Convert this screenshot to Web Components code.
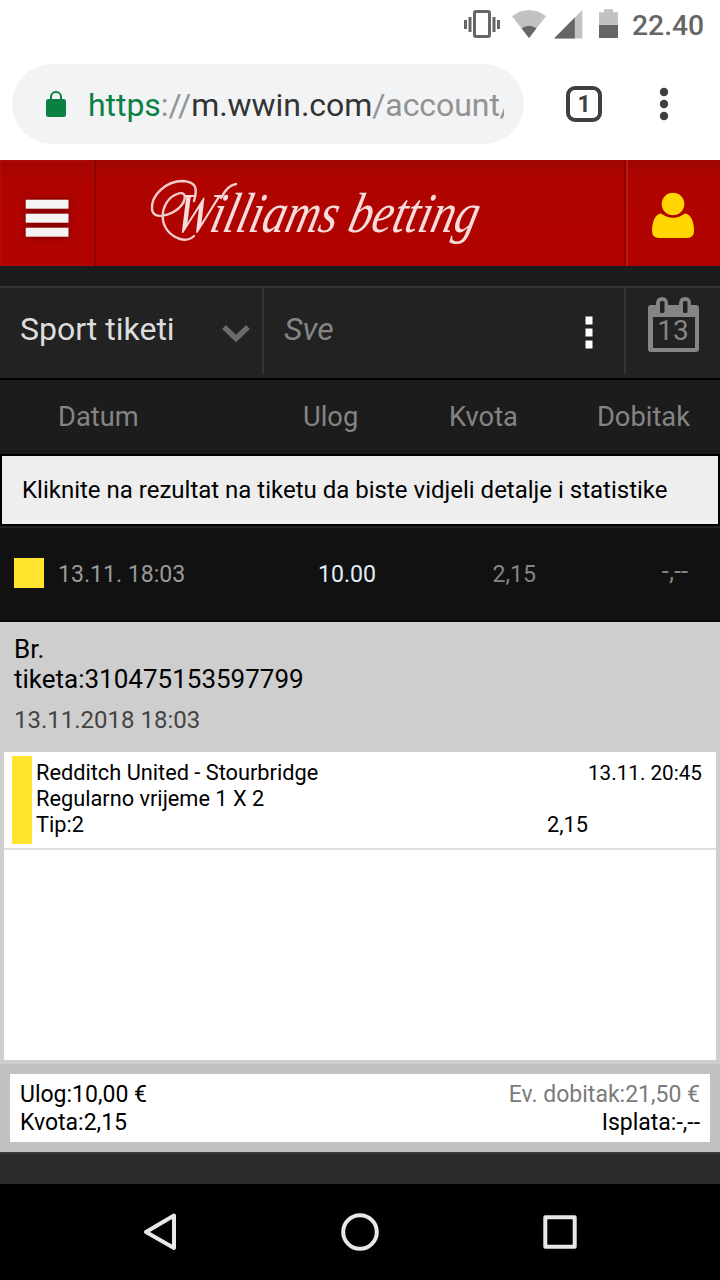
<!DOCTYPE html>
<html lang="bs">
<head>
<meta charset="utf-8">
<meta name="viewport" content="width=device-width, initial-scale=1">
<title>Williams betting</title>
<style>
	html, body {
		margin: 0;
		padding: 0;
	}
	body {
		width: 720px;
		height: 1280px;
		overflow: hidden;
		background: #2b2b2b;
		font-family: Roboto, "Liberation Sans", sans-serif;
	}
</style>
</head>
<body>
<phone-screen>
	<status-bar slot="top" time="22.40"></status-bar>
	<browser-bar slot="top" tabs="1"></browser-bar>
	<site-header></site-header>
	<ticket-filter kind="Sport tiketi" day="13">Sve</ticket-filter>
	<column-heads></column-heads>
	<info-note>Kliknite na rezultat na tiketu da biste vidjeli detalje i statistike</info-note>
	<ticket-row date="13.11. 18:03" stake="10.00" odds="2,15" win="-,--"></ticket-row>
	<ticket-detail number="310475153597799" date="13.11.2018 18:03">
		<match-item time="13.11. 20:45" odds="2,15">
			<span>Redditch United - Stourbridge</span>
			<span slot="market">Regularno vrijeme 1 X 2</span>
			<span slot="tip">Tip:2</span>
		</match-item>
	</ticket-detail>
	<ticket-totals>
		<span slot="left">Ulog:10,00 €</span>
		<span slot="left">Kvota:2,15</span>
		<span slot="right" style="color: #7b7b7b">Ev. dobitak:21,50 €</span>
		<span slot="right">Isplata:-,--</span>
	</ticket-totals>
	<nav-bar slot="bottom"></nav-bar>
</phone-screen>

<script>
// Small base: renders the template of the subclass into an open shadow root
class BaseElement extends HTMLElement {
	constructor() {
		super();
		this.attachShadow({ mode: 'open' });
	}

	connectedCallback() {
		this.shadowRoot.innerHTML = this.render();
	}

	attr(name) {
		return this.getAttribute(name) || '';
	}
}

class PhoneScreen extends BaseElement {
	render() {
		return `
			<style>
				:host {
					display: flex;
					flex-direction: column;
					width: 720px;
					height: 1280px;
				}
				main {
					flex: 1;
					display: flex;
					flex-direction: column;
					background: #2b2b2b;
				}
			</style>
			<slot name="top"></slot>
			<main><slot></slot></main>
			<slot name="bottom"></slot>
		`;
	}
}

customElements.define('phone-screen', PhoneScreen);

class StatusBar extends BaseElement {
	render() {
		return `
			<style>
				:host {
					display: flex;
					justify-content: flex-end;
					align-items: center;
					height: 50px;
					box-sizing: border-box;
					padding-right: 16px;
					background: #fff;
					color: #666;
					font-size: 28.3px;
					font-weight: 500;
				}
				svg { display: block; }
				time { width: 72px; margin-left: 12px; line-height: 48px; padding-top: 2px; }
			</style>
			<svg width="156" height="50" viewBox="464 0 156 50">
				<path fill="#666" d="M464 20h3v9h-3zM468.500 17h3v15h-3zM492.500 17h3v15h-3zM497 20h3v9h-3z"/>
				<rect x="474.500" y="11.500" width="15" height="25" rx="1.500" fill="none" stroke="#666" stroke-width="3"/>
				<path fill="#c2c2c2" d="M529 38L512 16.200Q529 3.600 546 16.200Z"/>
				<path fill="#666" d="M529 38L521.500 28.300Q529 23 536.500 28.300Z"/>
				<path fill="#c2c2c2" d="M582.300 10V38.500H554z"/>
				<path fill="#666" d="M574.800 17.500V38.500H554z"/>
				<path fill="#c2c2c2" d="M604 9.300h9v3h5v13h-19v-13h5z"/>
				<path fill="#666" d="M599 25h19v13h-19z"/>
			</svg>
			<time>${this.attr('time')}</time>
		`;
	}
}

customElements.define('status-bar', StatusBar);

class BrowserBar extends BaseElement {
	render() {
		return `
			<style>
				:host {
					display: flex;
					align-items: center;
					height: 110px;
					box-sizing: border-box;
					padding: 0 12px 2px;
					background: #fff;
				}
				.url {
					display: flex;
					align-items: center;
					width: 512px;
					height: 80px;
					box-sizing: border-box;
					padding: 0 20px 0 34px;
					border-radius: 40px;
					background: #f1f3f5;
					font-size: 32px;
					letter-spacing: -.06px;
					color: #929292;
				}
				.text {
					flex: 1;
					margin-left: 22px;
					padding-top: 1px;
					overflow: hidden;
					white-space: nowrap;
				}
				.secure { color: #0b8043; }
				.host { color: #333; }
				.tabs {
					width: 36px;
					height: 36px;
					box-sizing: border-box;
					margin-left: 42px;
					border: 4px solid #3c4043;
					border-radius: 9px;
					color: #3c4043;
					font-size: 23px;
					font-weight: 700;
					line-height: 30px;
					text-align: center;
				}
				.more { margin-left: 57px; }
			</style>
			<div class="url">
				<svg width="20" height="26" viewBox="0 0 20 26">
					<path d="M5 10V6a5 5 0 0 1 10 0v4" fill="none" stroke="#0b8043" stroke-width="2"/>
					<rect y="8" width="20" height="18" rx="2.500" fill="#0b8043"/>
				</svg>
				<div class="text"><span class="secure">https</span>://<span class="host">m.wwin.com</span>/account/</div>
			</div>
			<div class="tabs">${this.attr('tabs')}</div>
			<svg class="more" width="10" height="34" viewBox="0 0 10 34" overflow="visible" fill="#3c4043">
				<circle cx="5" cy="5" r="4.200"/>
				<circle cx="5" cy="17" r="4.200"/>
				<circle cx="5" cy="29" r="4.200"/>
			</svg>
		`;
	}
}

customElements.define('browser-bar', BrowserBar);

class SiteHeader extends BaseElement {
	render() {
		return `
			<style>
				:host {
					display: flex;
					height: 106px;
					margin-bottom: 20px;
					background: linear-gradient(#a00602, #b00400 18px, #b00300);
					box-shadow: 0 20px 0 #1c1c1c;
				}
				.menu {
					width: 94px;
					box-shadow: inset 0 0 3px #c01410;
					border-right: 2px solid #8c0200;
				}
				.logo { flex: 1; }
				.user {
					width: 92px;
					border-left: 2px solid #c01410;
					box-shadow: -2px 0 0 #8c0200;
				}
				svg { display: block; }
				text {
					font-family: "Liberation Serif", serif;
					font-style: italic;
				}
			</style>
			<div class="menu">
				<svg width="94" height="106" viewBox="0 0 94 106">
					<g fill="#f4f4f4" style="filter: drop-shadow(0 0 3px #600)">
						<rect x="25.700" y="39.700" width="42.800" height="9"/>
						<rect x="25.700" y="53.700" width="42.800" height="9"/>
						<rect x="25.700" y="67.700" width="42.800" height="9"/>
					</g>
				</svg>
			</div>
			<div class="logo">
				<svg width="528" height="106" viewBox="96 160 528 106" fill="#f7dcdc">
					<!-- swashes around the wordmark -->
					<g fill="none" stroke="#f3cccc" stroke-width="2.400" stroke-linecap="round">
						<path d="M194 201C198 188 196 182 183 181C165 181 151 196 152 209C153 221 171 215 179 208C187 200 187 190 177 194C159 201 156 231 180 239C187 241 191 239 194 236"/>
						<path d="M221 198C225 190 229 185 236 184"/>
					</g>
					<text transform="translate(172 232) skewX(-14) scale(1 1.200)" font-size="47" textLength="303" lengthAdjust="spacingAndGlyphs">Williams betting</text>
				</svg>
			</div>
			<div class="user">
				<svg width="92" height="106" viewBox="628 160 92 106" fill="#ffd600">
					<circle cx="673" cy="204" r="11.300"/>
					<path d="M661 213.500Q673 222 685 213.500C691 214 694 222 694 231Q694 238 687 238H659Q652 238 652 231C652 222 655 214 661 213.500Z"/>
				</svg>
			</div>
		`;
	}
}

customElements.define('site-header', SiteHeader);

class TicketFilter extends BaseElement {
	render() {
		return `
			<style>
				:host {
					display: flex;
					height: 94px;
					box-sizing: border-box;
					border-top: 2px solid #333;
					border-bottom: 2px solid #000;
					padding-bottom: 4px;
					background: #222;
					font-size: 32px;
				}
				div {
					display: flex;
					align-items: center;
					justify-content: space-between;
					box-sizing: border-box;
					padding-bottom: 4px;
				}
				svg { display: block; }
				.kind {
					width: 264px;
					padding-left: 20px;
					padding-right: 12px;
					border-right: 2px solid #333;
					color: #ddd;
				}
				.kind svg { margin-top: 10px; }
				.search {
					flex: 1;
					padding-left: 20px;
					padding-right: 31px;
					border-right: 2px solid #333;
					color: #858585;
					font-style: italic;
				}
				.search svg { margin-top: 6px; }
				.day {
					width: 94px;
					padding: 0;
				}
				text { font-size: 28px; }
			</style>
			<div class="kind">
				${this.attr('kind')}
				<svg width="29" height="20" viewBox="0 0 29 20">
					<path d="M3 3L15 14.500L27 3" fill="none" stroke="#6b6b6b" stroke-width="5.500"/>
				</svg>
			</div>
			<div class="search">
				<slot></slot>
				<svg width="8" height="34" viewBox="0 0 8 34" fill="#fff">
					<path d="M.5 1.500h7v8h-7zM.5 13.500h7v8h-7zM.5 25.500h7v8h-7z"/>
				</svg>
			</div>
			<div class="day">
				<svg width="94" height="86" viewBox="626 288 94 86">
					<path fill="#858585" fill-rule="evenodd" d="M651 305H656V303Q656.500 297 662 297Q667.500 297 668 303V305H679V303Q679.500 297 685 297Q690.500 297 691 303V305H696Q699 305 699 308V349Q699 352 696 352H651Q648 352 648 349V308Q648 305 651 305ZM653 317V348H695V317Z"/>
					<rect x="660" y="301" width="4.500" height="12" rx="1.500" fill="#222"/>
					<rect x="683" y="301" width="4.500" height="12" rx="1.500" fill="#222"/>
					<text x="673" y="340" text-anchor="middle" fill="#858585">${this.attr('day')}</text>
				</svg>
			</div>
		`;
	}
}

customElements.define('ticket-filter', TicketFilter);

class ColumnHeads extends BaseElement {
	render() {
		return `
			<style>
				:host {
					display: flex;
					align-items: center;
					height: 74px;
					box-sizing: border-box;
					padding: 0 30px 0 58px;
					background: #1c1c1c;
					color: #848484;
					font-size: 27.3px;
				}
				span:nth-of-type(1) { width: 245px; }
				span:nth-of-type(2) { width: 146px; }
				span:last-child { flex: 1; text-align: right; }
			</style>
			<span>Datum</span>
			<span>Ulog</span>
			<span>Kvota</span>
			<span>Dobitak</span>
		`;
	}
}

customElements.define('column-heads', ColumnHeads);

class InfoNote extends BaseElement {
	render() {
		return `
			<style>
				:host {
					display: block;
					border: 2px solid #000;
					padding: 0 20px;
					background: #eee;
					color: #000;
					font-size: 24px;
					line-height: 68px;
					white-space: nowrap;
				}
			</style>
			<slot></slot>
		`;
	}
}

customElements.define('info-note', InfoNote);

class TicketRow extends BaseElement {
	render() {
		return `
			<style>
				:host {
					display: flex;
					align-items: center;
					height: 96px;
					box-sizing: border-box;
					padding: 0 32px 0 14px;
					border-top: 2px solid #222;
					border-bottom: 2px solid #0a0a0a;
					background: #111;
					color: #848484;
					font-size: 23.1px;
				}
				i {
					width: 30px;
					height: 30px;
					margin-right: 14px;
					margin-bottom: 2px;
					background: #ffe32d;
				}
				.date { width: 260px; color: #999; }
				.stake { width: 174.500px; color: #e3edf5; }
				.win { flex: 1; text-align: right; margin-bottom: 6px; font-size: 25.5px; }
			</style>
			<i></i>
			<span class="date">${this.attr('date')}</span>
			<span class="stake">${this.attr('stake')}</span>
			<span>${this.attr('odds')}</span>
			<span class="win">${this.attr('win')}</span>
		`;
	}
}

customElements.define('ticket-row', TicketRow);

class TicketDetail extends BaseElement {
	render() {
		return `
			<style>
				:host {
					display: flex;
					flex-direction: column;
					height: 442px;
					box-sizing: border-box;
					padding: 12px 4px 4px;
					background: #cecece;
				}
				header {
					height: 118px;
					padding-left: 10px;
					font-size: 26px;
					line-height: 30px;
				}
				time {
					display: block;
					margin-top: 11px;
					color: #444;
					font-size: 24px;
				}
				section { flex: 1; background: #fff; }
			</style>
			<header>
				<div>Br.<br>tiketa:${this.attr('number')}</div>
				<time>${this.attr('date')}</time>
			</header>
			<section><slot></slot></section>
		`;
	}
}

customElements.define('ticket-detail', TicketDetail);

class MatchItem extends BaseElement {
	render() {
		return `
			<style>
				:host {
					display: flex;
					height: 98px;
					box-sizing: border-box;
					padding: 4px 14px 4px 8px;
					border-bottom: 2px solid #e0e0e0;
					font-size: 21.75px;
					line-height: 26px;
				}
				.mark {
					width: 20px;
					background: #ffe32d;
				}
				.lines { flex: 1; padding: 4px 0 0 4px; }
				.line {
					display: flex;
					justify-content: space-between;
				}
				.time { font-size: 20.7px; }
				.odds { margin-right: 114px; }
			</style>
			<div class="mark"></div>
			<div class="lines">
				<div class="line"><slot></slot><span class="time">${this.attr('time')}</span></div>
				<div class="line"><slot name="market"></slot></div>
				<div class="line"><slot name="tip"></slot><span class="odds">${this.attr('odds')}</span></div>
			</div>
		`;
	}
}

customElements.define('match-item', MatchItem);

class TicketTotals extends BaseElement {
	render() {
		return `
			<style>
				:host {
					display: block;
					padding: 10px;
					background: #c1c1c1;
					border-bottom: 2px solid #3c3c3c;
				}
				.box {
					display: flex;
					justify-content: space-between;
					padding: 7px 10px 5px;
					background: #fff;
					font-size: 23px;
					line-height: 28px;
				}
				.col { display: flex; flex-direction: column; }
				.col:last-child { text-align: right; }
			</style>
			<div class="box">
				<div class="col"><slot name="left"></slot></div>
				<div class="col"><slot name="right"></slot></div>
			</div>
		`;
	}
}

customElements.define('ticket-totals', TicketTotals);

class NavBar extends BaseElement {
	render() {
		return `
			<style>
				:host {
					display: flex;
					align-items: center;
					justify-content: center;
					gap: 160px;
					height: 96px;
					background: #000;
				}
				svg { display: block; fill: none; stroke: #e8e8e8; stroke-width: 4; stroke-linejoin: round; }
			</style>
			<svg width="40" height="40"><path d="M34 3.500V36L6 20Z"/></svg>
			<svg width="40" height="40"><circle cx="20" cy="20" r="16.800"/></svg>
			<svg width="40" height="40"><rect x="5.300" y="5.300" width="29.400" height="29.400"/></svg>
		`;
	}
}

customElements.define('nav-bar', NavBar);
</script>
</body>
</html>
